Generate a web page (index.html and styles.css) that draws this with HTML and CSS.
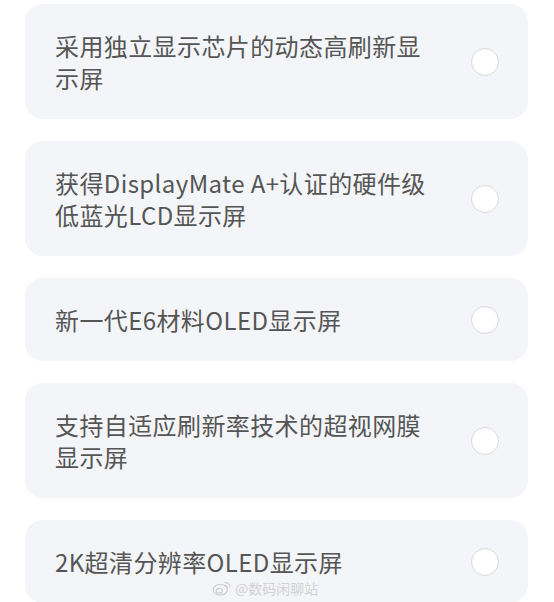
FILE: index.html
```html
<!DOCTYPE html>
<html lang="zh-CN">
<head>
    <meta charset="UTF-8">
    <meta name="viewport" content="width=device-width, initial-scale=1.0">
    <title>显示屏选项</title>
    <link rel="stylesheet" href="styles.css">
</head>
<body>
    <ul class="option-list">
        <li class="option">
            <span class="option-text">采用独立显示芯片的动态高刷新显示屏</span>
            <span class="radio"></span>
        </li>
        <li class="option">
            <span class="option-text">获得DisplayMate A+认证的硬件级低蓝光LCD显示屏</span>
            <span class="radio"></span>
        </li>
        <li class="option">
            <span class="option-text">新一代E6材料OLED显示屏</span>
            <span class="radio"></span>
        </li>
        <li class="option">
            <span class="option-text">支持自适应刷新率技术的超视网膜显示屏</span>
            <span class="radio"></span>
        </li>
        <li class="option">
            <span class="option-text">2K超清分辨率OLED显示屏</span>
            <span class="radio"></span>
        </li>
    </ul>

    <div class="watermark">
        <svg width="20" height="16" viewBox="0 0 22 18">
            <ellipse cx="9" cy="11" rx="8" ry="6" fill="none" stroke="#cfcfcf" stroke-width="1.4"/>
            <ellipse cx="8" cy="12" rx="3.5" ry="2.6" fill="none" stroke="#cfcfcf" stroke-width="1.2"/>
            <path d="M14 3 a5 5 0 0 1 6 5" fill="none" stroke="#cfcfcf" stroke-width="1.4"/>
            <path d="M14 6 a2.5 2.5 0 0 1 3 3" fill="none" stroke="#cfcfcf" stroke-width="1.2"/>
        </svg>
        <span>@数码闲聊站</span>
    </div>
</body>
</html>
```

FILE: styles.css
```css
/* 页面基础 */
body {
    margin: 0;
    padding: 4px 0 0;
    background: #fff;
    font-family: "Noto Sans CJK SC", "Noto Sans", sans-serif;
}

.option-list {
    list-style: none;
    margin: 0;
    padding: 0 26px 0 25px;
    display: flex;
    flex-direction: column;
    gap: 22px;
}

/* 选项卡片 */
.option {
    display: flex;
    align-items: center;
    justify-content: space-between;
    padding: 26px 29px 25px 30px;
    background: #f4f5f8;
    border-radius: 18px;
}

.option-text {
    max-width: 384px;
    font-size: 24px;
    line-height: 32px;
    color: #555;
    letter-spacing: 0.4px;
}

.radio {
    flex: none;
    width: 26px;
    height: 26px;
    border: 1px solid #d9d9d9;
    border-radius: 50%;
    background: #fff;
}

/* 水印 */
.watermark {
    position: absolute;
    left: 212px;
    top: 579px;
    display: flex;
    align-items: center;
    gap: 3px;
    font-size: 14px;
    line-height: 18px;
    color: #d2d2d2;
}
```
